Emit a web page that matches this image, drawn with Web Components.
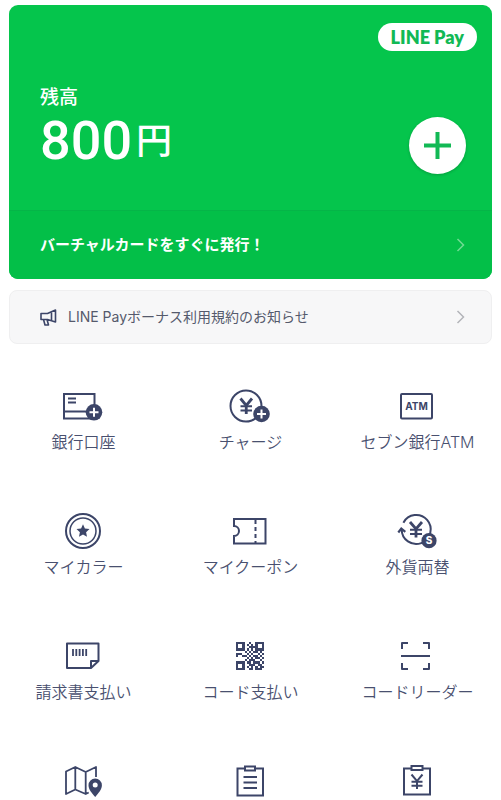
<!DOCTYPE html>
<html lang="ja">
<head>
<meta charset="utf-8">
<meta name="viewport" content="width=device-width, initial-scale=1">
<title>LINE Pay</title>
<style>
body { margin: 0; background: #fff; color: #49506f; font-family: Inter, "Noto Sans CJK JP", sans-serif; }
</style>
</head>
<body>
<pay-app></pay-app>
<script>
const NAVY = '#3c4568';
const yen = (x, y, w, h, s) => `<path stroke-width="${s}" d="M${x} ${y}L${x + w / 2} ${y + h * .45}L${x + w} ${y}M${x + w / 2} ${y + h * .45}V${y + h}"/><path stroke-width="2" d="M${x} ${y + h * .5}H${x + w}M${x} ${y + h * .77}H${x + w}"/>`;
const plusBadge = (x, y) => `<circle cx="${x}" cy="${y}" r="8.3" fill="${NAVY}" stroke="none"/><path stroke="#fff" d="M${x - 4.5} ${y}h9M${x} ${y - 4.5}v9"/>`;
const QR = [
  '1111001001111',
  '1001010101001',
  '1001001111001',
  '1111010101111',
  '0000101011010',
  '1110010100101',
  '1001101011010',
  '0000010101101',
  '0000101110010',
  '1111011011101',
  '1001001110110',
  '1001010101011',
  '1111001101110'
];
const qrCells = () => QR.map((row, y) => [...row].map((c, x) =>
  c === '1' ? `<path d="M${x} ${y}h1v1h-1z"/>` : '').join('')).join('');

const ICONS = {
  bank: `<rect x="4" y="7" width="30.5" height="24.5"/><path d="M4 24.5h30M8 11.5h8M8 15.5h8"/>${plusBadge(34, 25.3)}`,
  charge: `<circle cx="19" cy="19" r="15.5"/>${yen(13.5, 11.5, 11.5, 15.5, 2.8)}${plusBadge(34.5, 27)}`,
  atm: `<rect x="7" y="7" width="31" height="24.5" rx="1"/><text x="22.5" y="23" text-anchor="middle" font-size="10" font-weight="700" fill="${NAVY}" stroke="none">ATM</text>`,
  color: `<circle cx="23" cy="19" r="17"/><circle cx="23" cy="19" r="13" stroke-width="1.5"/><path fill="${NAVY}" stroke="none" d="M23 12.3l1.9 4.3 4.6.5-3.4 3.1.9 4.6-4-2.3-4 2.3.9-4.6-3.4-3.1 4.6-.5z"/>`,
  coupon: `<path d="M7 14V7h31.5v24.5H7V24a5 5 0 0 0 0-10z" stroke="none"/><path stroke-linecap="square" d="M7 14V7h31.500v24.500H7V24a5 5 0 0 0 0-10"/><path stroke-dasharray="4 3" d="M28.500 8v23"/>`,
  exchange: `<path d="M9.400 10.700A14.500 14.500 0 1 1 7.700 17.500"/><path stroke-width="2.200" d="M4.300 20.500L7.300 16.500l4 3.300"/>${yen(16, 10, 12, 15.5, 2.8)}<circle cx="35" cy="28.700" r="7.600" fill="${NAVY}" stroke="none"/><text x="35" y="32.400" text-anchor="middle" font-size="10" font-weight="800" fill="#fff" stroke="none">S</text>`,
  bill: `<path stroke-linejoin="round" d="M31 31H7V6.500h31.500v17.500zM31 31v-7h7.500"/><path stroke-width="1.800" d="M13 12v7M16.300 12v7M19.600 12v7M22.900 12v7M26.200 12v7"/>`,
  qr: `<g transform="translate(9 5) scale(2.15)" fill="${NAVY}" stroke="none" shape-rendering="crispEdges">${qrCells()}</g>`,
  scan: `<path stroke-linejoin="round" d="M8 12V6h6M29 6h6v6M8 26v6h6M29 32h6v-6M7 19h29"/>`,
  map: `<path stroke-width="1.800" stroke-linejoin="round" d="M36 15V5l-10.300 5L15.300 5 6 9.500V32l9.300-4.500 10.400 4.500 3-1.500M15.300 5v22.500M25.700 10v22"/><path fill="${NAVY}" stroke="none" d="M35.200 35c-3.500-4.200-6.700-7.500-6.700-11.800a6.700 6.700 0 0 1 13.400 0c0 4.300-3.200 7.600-6.700 11.800z"/><circle cx="35.200" cy="23" r="2.500" fill="#fff" stroke="none"/>`,
  list: `<path d="M18 6.500h-7.500V33.500h25.500V6.500H28M18 4.500h10v4H18zM16.500 15H30M16.500 20.500H30M16.500 26H30"/>`,
  yenboard: `<path d="M17.500 6.500H10V32.500h26V6.500h-7.500M17.500 4h11v4h-11z"/>${yen(17.5, 12.500, 11, 14.500, 2)}`,
  horn: `<path stroke-width="1.600" stroke-linejoin="round" d="M2 5.500h6.500L16.500 2v12L8.500 11.500H2zM12.500 4v9M4.500 11.500l1.500 5.500h3.500L8 11.500"/>`
};

const define = (name, html) => {
  const tpl = document.createElement('template');
  tpl.innerHTML = html;
  customElements.define(name, class extends HTMLElement {
    constructor() {
      super();
      this.attachShadow({ mode: 'open' }).append(tpl.content.cloneNode(true));
    }
  });
};

customElements.define('pay-icon', class extends HTMLElement {
  constructor() { super(); this.attachShadow({ mode: 'open' }); }
  connectedCallback() {
    const small = this.getAttribute('name') === 'horn';
    const [w, h] = small ? [18, 18] : [47, 38];
    this.shadowRoot.innerHTML = `<style>:host{display:block;flex:none}svg{display:block;font-family:Inter,sans-serif}</style>
      <svg width="${w}" height="${h}" viewBox="0 0 ${w} ${h}" fill="none" stroke="${NAVY}" stroke-width="2" aria-hidden="true">${ICONS[this.getAttribute('name')]}</svg>`;
  }
});

define('pay-chevron', `<style>:host{display:block;flex:none}svg{display:block}</style>
  <svg width="10" height="16" viewBox="0 0 10 16" fill="none" stroke="currentColor" stroke-width="1.5" aria-hidden="true"><path d="M1.500 2l6 6-6 6"/></svg>`);

define('pay-card', `<style>
  :host { display: block; border-radius: 9px; overflow: hidden; background: #05c54c; color: #fff; }
  .top { display: flex; justify-content: flex-end; padding: 18px 15px 0; }
  .logo { background: #fff; color: #12b955; border-radius: 14px; padding: 0 13px; font: 800 18px/28px Lato, sans-serif; }
  .main { display: flex; align-items: flex-end; justify-content: space-between; padding: 35px 26px 36px 31px; }
  .label { font-size: 19px; line-height: 24px; font-weight: 500; }
  .amount { display: flex; align-items: flex-start; gap: 4px; font: 500 54px/62px Roboto, sans-serif; padding-bottom: 2px; }
  .amount small { font: 500 36px/56px "Noto Sans CJK JP", sans-serif; }
  .add { width: 57px; height: 57px; padding: 0; border: 0; border-radius: 50%; background: #fff; color: #12b955; box-shadow: 0 1px 3px #0003; }
  .add svg { display: block; margin: auto; }
  .issue { display: flex; align-items: center; justify-content: space-between; width: 100%; height: 69px; padding: 0 26px 0 31px; border: 0; border-top: 1px solid #05b548; background: #03bf48; color: #fff; font: 700 15px/22px Inter, "Noto Sans CJK JP", sans-serif; }
  pay-chevron { color: #6fdc93; }
</style>
<div class="top"><span class="logo">LINE Pay</span></div>
<div class="main">
  <div><div class="label">残高</div><div class="amount"><span>800</span><small>円</small></div></div>
  <button class="add" aria-label="チャージ"><svg width="29" height="29" viewBox="0 0 29 29" stroke="currentColor" stroke-width="4"><path d="M1 14.500h27M14.500 1v27"/></svg></button>
</div>
<button class="issue"><slot></slot><pay-chevron></pay-chevron></button>`);

define('pay-notice', `<style>
  :host { display: block; }
  button { display: flex; align-items: center; gap: 11px; width: 100%; height: 54px; padding: 0 25px 0 29px; border: 1px solid #efeff0; border-radius: 8px; background: #f7f7f8; color: #555a6c; font: 400 14px/20px Inter, "Noto Sans CJK JP", sans-serif; text-align: left; }
  .text { flex: 1; }
  pay-chevron { color: #b3b4b9; }
</style>
<button><pay-icon name="horn"></pay-icon><span class="text"><slot></slot></span><pay-chevron></pay-chevron></button>`);

customElements.define('pay-item', class extends HTMLElement {
  constructor() { super(); this.attachShadow({ mode: 'open' }); }
  connectedCallback() {
    this.shadowRoot.innerHTML = `<style>
      :host { display: block; }
      button { display: flex; flex-direction: column; align-items: center; gap: 7px; width: 100%; padding: 0; border: 0; background: none; color: inherit; font: 350 16px/20px Inter, "Noto Sans CJK JP", sans-serif; white-space: nowrap; }
    </style><button><pay-icon name="${this.getAttribute('icon')}"></pay-icon><slot></slot></button>`;
  }
});

define('pay-menu', `<style>
  :host { display: grid; grid-template-columns: repeat(3, minmax(0, 1fr)); row-gap: 60px; }
</style><slot></slot>`);

define('pay-app', `<style>
  :host { display: block; padding-top: 5px; }
  pay-card, pay-notice { margin: 0 9px; }
  pay-notice { margin-top: 11px; }
  pay-menu { margin-top: 43px; }
</style>
<pay-card>バーチャルカードをすぐに発行！</pay-card>
<pay-notice>LINE Payボーナス利用規約のお知らせ</pay-notice>
<pay-menu>
  <pay-item icon="bank">銀行口座</pay-item>
  <pay-item icon="charge">チャージ</pay-item>
  <pay-item icon="atm">セブン銀行ATM</pay-item>
  <pay-item icon="color">マイカラー</pay-item>
  <pay-item icon="coupon">マイクーポン</pay-item>
  <pay-item icon="exchange">外貨両替</pay-item>
  <pay-item icon="bill">請求書支払い</pay-item>
  <pay-item icon="qr">コード支払い</pay-item>
  <pay-item icon="scan">コードリーダー</pay-item>
  <pay-item icon="map"></pay-item>
  <pay-item icon="list"></pay-item>
  <pay-item icon="yenboard"></pay-item>
</pay-menu>`);
</script>
</body>
</html>
